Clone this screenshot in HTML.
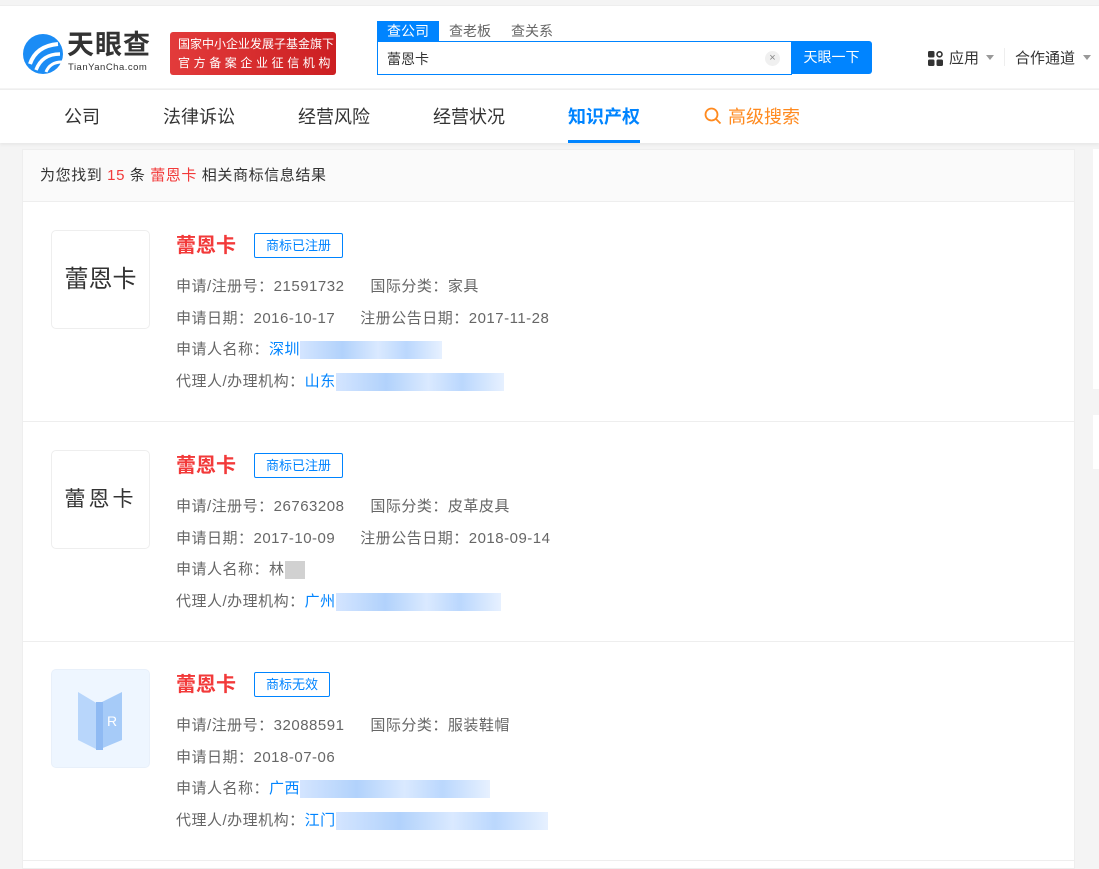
<!DOCTYPE html>
<html><head><meta charset="utf-8"><style>
*{margin:0;padding:0;box-sizing:border-box}
body{width:1099px;height:862px;overflow:hidden;background:#f4f4f4;font-family:"Liberation Sans","Noto Sans CJK SC",sans-serif;position:relative;color:#333}
.a{position:absolute;white-space:nowrap}
.hdr{position:absolute;left:0;top:5px;width:1099px;height:83px;background:#fff;border-top:1px solid #eee}
.nav{position:absolute;left:0;top:89px;width:1099px;height:54px;background:#fff;border-top:1px solid #eee;box-shadow:0 2px 3px rgba(0,0,0,.05)}
.nav span{position:absolute;top:13px;font-size:18px;color:#333}
.panel{position:absolute;left:22px;top:149px;width:1053px;height:720px;background:#fff;border:1px solid #eee}
.ph{position:absolute;left:0;top:0;width:100%;height:52px;background:#fafafa;border-bottom:1px solid #eee}
.card{position:absolute;left:0;width:100%;height:220px;border-bottom:1px solid #eee}
.logo{position:absolute;left:28px;top:28px;width:99px;height:99px;border:1px solid #eee;border-radius:5px;background:#fff;font-size:24px;color:#333;text-align:center;line-height:97px}
.t{position:absolute;left:153px;top:27px;font-size:20px;font-weight:bold;color:#f23a3a}
.tag{position:absolute;left:231px;top:31px;height:25px;padding:0 11px;border:1px solid #0084ff;border-radius:2px;color:#0084ff;font-size:13px;line-height:23px}
.l{position:absolute;left:153px;font-size:15px;color:#666;letter-spacing:.5px}
.b{color:#0084ff}
.blur{display:inline-block;vertical-align:middle;height:18px;background:linear-gradient(90deg,#cfe2ff,#a9cdfb 30%,#d6e7ff 55%,#b3d3fd 75%,#e4efff);opacity:.9}
</style></head><body>
<div class="hdr"></div>
<svg class="a" style="left:22px;top:32px" width="42" height="44" viewBox="0 0 42 44"><circle cx="21" cy="22" r="20" fill="#1b8cf5"/><path d="M8 32 Q14 14 36 12" stroke="#fff" stroke-width="4" fill="none"/><path d="M14 38 Q20 22 38 22" stroke="#fff" stroke-width="3.5" fill="none"/><path d="M24 40 Q28 30 40 30" stroke="#fff" stroke-width="3" fill="none"/></svg>
<div class="a" style="left:67px;top:30px;font-size:27px;font-weight:bold;color:#333;letter-spacing:1px;line-height:30px">天眼查</div>
<div class="a" style="left:68px;top:62px;font-size:9.5px;color:#333;letter-spacing:.5px;line-height:11px">TianYanCha.com</div>
<div class="a" style="left:170px;top:32px;width:166px;height:43px;background:linear-gradient(90deg,#e23b3b,#cc1f22);border-radius:3px;color:#fff;font-size:12px;line-height:19px;padding:3px 0 0 8px;overflow:hidden">国家中小企业发展子基金旗下<br><span style="letter-spacing:3.6px">官方备案企业征信机构</span></div>
<div class="a" style="left:377px;top:21px;width:62px;height:20px;background:#0084ff;color:#fff;font-size:14px;text-align:center;line-height:20px">查公司</div>
<div class="a" style="left:449px;top:21px;font-size:14px;color:#666;line-height:20px">查老板</div>
<div class="a" style="left:511px;top:21px;font-size:14px;color:#666;line-height:20px">查关系</div>
<div class="a" style="left:377px;top:41px;width:415px;height:34px;border:1px solid #0084ff;border-right:none;background:#fff"></div>
<div class="a" style="left:387px;top:49px;font-size:14px;color:#333">蕾恩卡</div>
<div class="a" style="left:765px;top:51px;width:15px;height:15px;border-radius:50%;background:#f0f0f0;color:#888;font-size:11px;text-align:center;line-height:15px">×</div>
<div class="a" style="left:791px;top:41px;width:81px;height:33px;background:#0084ff;border-radius:0 3px 3px 0;color:#fff;font-size:14px;text-align:center;line-height:33px">天眼一下</div>
<svg class="a" style="left:928px;top:51px" width="15" height="15"><rect x="0" y="0" width="6.5" height="6.5" rx="1.5" fill="#333"/><circle cx="11.5" cy="3.3" r="2.5" fill="none" stroke="#333" stroke-width="1.6"/><rect x="0" y="8.5" width="6.5" height="6.5" rx="1.5" fill="#333"/><rect x="8.5" y="8.5" width="6.5" height="6.5" rx="1.5" fill="#333"/></svg>
<div class="a" style="left:949px;top:47px;font-size:15px;color:#333">应用</div>
<div class="a" style="left:986px;top:55px;border:4px solid transparent;border-top:5px solid #999"></div>
<div class="a" style="left:1004px;top:48px;width:1px;height:18px;background:#eee"></div>
<div class="a" style="left:1015px;top:47px;font-size:15px;color:#333">合作通道</div>
<div class="a" style="left:1083px;top:55px;border:4px solid transparent;border-top:5px solid #999"></div>
<div class="nav">
<span style="left:64px">公司</span><span style="left:163px">法律诉讼</span><span style="left:298px">经营风险</span><span style="left:433px">经营状况</span>
<span style="left:568px;color:#0084ff;font-weight:bold">知识产权</span>
<div class="a" style="left:568px;top:50px;width:72px;height:3px;background:#0084ff"></div>
<svg class="a" style="left:704px;top:17px" width="18" height="18"><circle cx="7.5" cy="7.5" r="6" fill="none" stroke="#ff8a1f" stroke-width="1.8"/><path d="M12 12 L16.5 16.5" stroke="#ff8a1f" stroke-width="1.8"/></svg>
<span style="left:728px;color:#ff8a1f">高级搜索</span>
</div>
<div class="a" style="left:1093px;top:149px;width:6px;height:240px;background:#fff"></div>
<div class="a" style="left:1093px;top:415px;width:6px;height:54px;background:#fff"></div>
<div class="panel">
<div class="ph"><div class="a" style="left:17px;top:14px;font-size:15px;color:#333;letter-spacing:.6px">为您找到 <span style="color:#f23a3a">15</span> 条 <span style="color:#f23a3a">蕾恩卡</span> 相关商标信息结果</div></div>
<div class="card" style="top:52px">
<div class="logo">蕾恩卡</div>
<div class="t">蕾恩卡</div><div class="tag">商标已注册</div>
<div class="l" style="top:73px">申请/注册号：21591732<span style="margin-left:26px">国际分类：家具</span></div>
<div class="l" style="top:105px">申请日期：2016-10-17<span style="margin-left:25px">注册公告日期：2017-11-28</span></div>
<div class="l" style="top:136px">申请人名称：<span class="b">深圳</span><span class="blur" style="width:142px"></span></div>
<div class="l" style="top:168px">代理人/办理机构：<span class="b">山东</span><span class="blur" style="width:168px"></span></div>
</div>
<div class="card" style="top:272px">
<div class="logo" style="font-size:21px;letter-spacing:3px">蕾恩卡</div>
<div class="t">蕾恩卡</div><div class="tag">商标已注册</div>
<div class="l" style="top:73px">申请/注册号：26763208<span style="margin-left:26px">国际分类：皮革皮具</span></div>
<div class="l" style="top:105px">申请日期：2017-10-09<span style="margin-left:25px">注册公告日期：2018-09-14</span></div>
<div class="l" style="top:136px">申请人名称：林<span class="blur" style="width:20px;background:#ccc"></span></div>
<div class="l" style="top:168px">代理人/办理机构：<span class="b">广州</span><span class="blur" style="width:165px"></span></div>
</div>
<div class="card" style="top:491px">
<div class="logo" style="background:#eef6ff;border-color:#e8f0fa">
<svg style="position:absolute;left:24px;top:14px" width="50" height="70" viewBox="0 0 50 70"><path d="M2 8 L22 20 L22 66 L2 56 Z" fill="#b8d6fb"/><path d="M22 20 L46 8 L46 56 L22 66 Z" fill="#a6cbf8"/><path d="M20 18 L27 18 L27 66 L20 66 Z" fill="#8fbaf3"/><text x="31" y="42" font-size="14" fill="#fff" font-family="Liberation Sans">R</text></svg></div>
<div class="t">蕾恩卡</div><div class="tag">商标无效</div>
<div class="l" style="top:73px">申请/注册号：32088591<span style="margin-left:26px">国际分类：服装鞋帽</span></div>
<div class="l" style="top:105px">申请日期：2018-07-06</div>
<div class="l" style="top:136px">申请人名称：<span class="b">广西</span><span class="blur" style="width:190px"></span></div>
<div class="l" style="top:168px">代理人/办理机构：<span class="b">江门</span><span class="blur" style="width:212px"></span></div>
</div>
</div>
</body></html>
